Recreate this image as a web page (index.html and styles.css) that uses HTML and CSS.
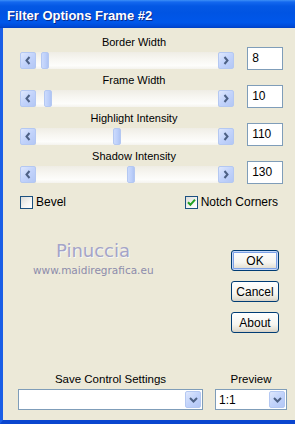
FILE: index.html
```html
<!DOCTYPE html>
<html lang="en">
  <head>
    <meta charset="UTF-8" />
    <meta name="viewport" content="width=device-width, initial-scale=1.0" />
    <title>Filter Options Frame #2</title>
    <link rel="stylesheet" href="styles.css">
  </head>
  <body>
    <div class="window">
      <div class="titlebar">
        <span class="title">Filter Options Frame #2</span>
      </div>

      <div class="client">
        <!-- Sliders -->
        <div class="sliders">
          <div class="slider-group">
            <div class="slider-label">Border Width</div>
            <div class="slider-row">
              <div class="scrollbar">
                <span class="sb-btn"><svg width="8" height="9" viewBox="0 0 8 9"><path d="M5.5 1 L2.5 4.5 L5.5 8" /></svg></span>
                <div class="sb-track"><span class="sb-thumb" style="left: 5px"></span></div>
                <span class="sb-btn"><svg width="8" height="9" viewBox="0 0 8 9"><path d="M2.5 1 L5.5 4.5 L2.5 8" /></svg></span>
              </div>
              <div class="numbox">8</div>
            </div>
          </div>

          <div class="slider-group">
            <div class="slider-label">Frame Width</div>
            <div class="slider-row">
              <div class="scrollbar">
                <span class="sb-btn"><svg width="8" height="9" viewBox="0 0 8 9"><path d="M5.5 1 L2.5 4.5 L5.5 8" /></svg></span>
                <div class="sb-track"><span class="sb-thumb" style="left: 8px"></span></div>
                <span class="sb-btn"><svg width="8" height="9" viewBox="0 0 8 9"><path d="M2.5 1 L5.5 4.5 L2.5 8" /></svg></span>
              </div>
              <div class="numbox">10</div>
            </div>
          </div>

          <div class="slider-group">
            <div class="slider-label">Highlight Intensity</div>
            <div class="slider-row">
              <div class="scrollbar">
                <span class="sb-btn"><svg width="8" height="9" viewBox="0 0 8 9"><path d="M5.5 1 L2.5 4.5 L5.5 8" /></svg></span>
                <div class="sb-track"><span class="sb-thumb" style="left: 77px"></span></div>
                <span class="sb-btn"><svg width="8" height="9" viewBox="0 0 8 9"><path d="M2.5 1 L5.5 4.5 L2.5 8" /></svg></span>
              </div>
              <div class="numbox">110</div>
            </div>
          </div>

          <div class="slider-group">
            <div class="slider-label">Shadow Intensity</div>
            <div class="slider-row">
              <div class="scrollbar">
                <span class="sb-btn"><svg width="8" height="9" viewBox="0 0 8 9"><path d="M5.5 1 L2.5 4.5 L5.5 8" /></svg></span>
                <div class="sb-track"><span class="sb-thumb" style="left: 91px"></span></div>
                <span class="sb-btn"><svg width="8" height="9" viewBox="0 0 8 9"><path d="M2.5 1 L5.5 4.5 L2.5 8" /></svg></span>
              </div>
              <div class="numbox">130</div>
            </div>
          </div>
        </div>

        <!-- Checkboxes -->
        <div class="checks">
          <label class="check">
            <span class="check-box"></span>
            <span>Bevel</span>
          </label>
          <label class="check">
            <span class="check-box"><svg width="9" height="9" viewBox="0 0 9 9"><path d="M1 4.2 L3.4 6.8 L8 1.6" /></svg></span>
            <span>Notch Corners</span>
          </label>
        </div>

        <!-- Watermark + buttons -->
        <div class="middle">
          <div class="watermark">
            <div class="wm-name">Pinuccia</div>
            <div class="wm-url">www.maidiregrafica.eu</div>
          </div>
          <div class="buttons">
            <button class="btn btn-default">OK</button>
            <button class="btn">Cancel</button>
            <button class="btn">About</button>
          </div>
        </div>

        <!-- Bottom combos -->
        <div class="bottom">
          <div class="combo-group">
            <div class="combo-label">Save Control Settings</div>
            <div class="combo">
              <span class="combo-text"></span>
              <span class="combo-btn"><svg width="9" height="6" viewBox="0 0 9 6"><path d="M1 1 L4.5 4.5 L8 1" /></svg></span>
            </div>
          </div>
          <div class="combo-group">
            <div class="combo-label">Preview</div>
            <div class="combo">
              <span class="combo-text">1:1</span>
              <span class="combo-btn"><svg width="9" height="6" viewBox="0 0 9 6"><path d="M1 1 L4.5 4.5 L8 1" /></svg></span>
            </div>
          </div>
        </div>
      </div>
    </div>
  </body>
</html>
```

FILE: styles.css
```css
/* Page */
body {
  margin: 0;
  padding: 0;
  font-family: "Liberation Sans", Arial, sans-serif;
  font-size: 11px;
  color: #000000;
  background: #ece9d8;
}

/* Window frame */
.window {
  width: 295px;
  height: 424px;
  display: flex;
  flex-direction: column;
  overflow: hidden;
}

.titlebar {
  height: 28px;
  flex-shrink: 0;
  display: flex;
  align-items: center;
  padding: 2px 0 0 7px;
  box-sizing: border-box;
  background: linear-gradient(#3d8ff6 0, #1468ef 2px, #0458e4 6px, #0054e3 45%, #0057ea 80%, #004bd9 93%, #0040c4 100%);
}

.title {
  color: #ffffff;
  font-weight: bold;
  font-size: 13px;
  text-shadow: 1px 1px #0a2a8a;
}

.client {
  flex: 1;
  display: flex;
  flex-direction: column;
  background: #ece9d8;
  border-left: 3px solid #1a5ee6;
  border-bottom: 4px solid #0a46cf;
  padding: 8px 12px 10px 17px;
}

/* Sliders */
.sliders {
  display: flex;
  flex-direction: column;
  gap: 4px;
}

.slider-label {
  width: 228px;
  text-align: center;
  line-height: 13px;
}

.slider-row {
  display: flex;
  align-items: flex-end;
  gap: 13px;
  margin-top: -2px;
}

.scrollbar {
  width: 215px;
  height: 17px;
  display: flex;
  margin-bottom: 1px;
}

.sb-btn {
  width: 16px;
  height: 17px;
  box-sizing: border-box;
  border: 1px solid #b4c8f2;
  border-radius: 2px;
  background: linear-gradient(135deg, #dfe8fd, #c2d3fb 50%, #b3c7f5);
  display: flex;
  align-items: center;
  justify-content: center;
  flex-shrink: 0;
}

.sb-btn svg path {
  fill: none;
  stroke: #4d6185;
  stroke-width: 2;
}

.sb-track {
  flex: 1;
  position: relative;
  background: linear-gradient(#efede5, #f7f6f1 40%, #fdfdfb 80%, #f4f3ee);
}

.sb-thumb {
  position: absolute;
  top: 0;
  width: 8px;
  height: 17px;
  box-sizing: border-box;
  border: 1px solid #b4c8f2;
  border-radius: 2px;
  background: linear-gradient(90deg, #cbdafc, #bccffa 60%, #afc4f3);
}

.numbox {
  width: 36px;
  height: 23px;
  box-sizing: border-box;
  border: 1px solid #7f9db9;
  background: #ffffff;
  font-size: 12px;
  line-height: 21px;
  padding-left: 4px;
}

/* Checkboxes */
.checks {
  display: flex;
  justify-content: space-between;
  margin-top: 12px;
  margin-right: 5px;
}

.check {
  display: flex;
  align-items: center;
  gap: 3px;
  font-size: 12px;
  line-height: 13px;
}

.check-box {
  width: 13px;
  height: 13px;
  box-sizing: border-box;
  border: 1px solid #1c5180;
  background: linear-gradient(135deg, #dcdcd7, #f6f6f4 60%, #ffffff);
  display: flex;
  align-items: center;
  justify-content: center;
}

.check-box svg path {
  fill: none;
  stroke: #21a121;
  stroke-width: 2;
}

/* Watermark + buttons */
.middle {
  display: flex;
  justify-content: space-between;
  margin-top: 32px;
}

.watermark {
  width: 120px;
  margin-left: 13px;
  text-align: center;
  font-family: "DejaVu Sans", sans-serif;
}

.wm-name {
  font-size: 18px;
  line-height: 20px;
  color: #a4a4c8;
  text-shadow: 1px 1px #f8f8f4;
}

.wm-url {
  font-size: 10.5px;
  line-height: 14px;
  color: #8c8cab;
  margin-top: 2px;
}

.buttons {
  display: flex;
  flex-direction: column;
  gap: 10px;
  margin-top: 9px;
  margin-right: 4px;
}

.btn {
  width: 48px;
  height: 21px;
  padding: 0;
  font-family: "Liberation Sans", Arial, sans-serif;
  font-size: 12px;
  color: #000000;
  border: 1px solid #003c74;
  border-radius: 3px;
  background: linear-gradient(#ffffff, #f6f5f0 60%, #e6e3d8 85%, #d6d0c5);
}

.btn-default {
  box-shadow: inset 0 0 0 1px #c6d8f8, inset 0 0 0 2px #7ea2e6;
}

/* Bottom combos */
.bottom {
  margin-top: auto;
  margin-left: -2px;
  margin-right: -4px;
  display: grid;
  grid-template-columns: 185px 72px;
  column-gap: 12px;
}

.combo-label {
  text-align: center;
  line-height: 13px;
  margin-bottom: 3px;
  font-size: 11.5px;
}

.combo {
  height: 21px;
  box-sizing: border-box;
  border: 1px solid #7f9db9;
  background: #ffffff;
  display: flex;
  align-items: center;
  padding: 1px;
}

.combo-text {
  flex: 1;
  padding-left: 2px;
  font-size: 12px;
}

.combo-btn {
  width: 16px;
  height: 17px;
  box-sizing: border-box;
  border: 1px solid #b4c8f2;
  border-radius: 2px;
  background: linear-gradient(135deg, #dfe8fd, #c2d3fb 50%, #b3c7f5);
  display: flex;
  align-items: center;
  justify-content: center;
}

.combo-btn svg path {
  fill: none;
  stroke: #4d6185;
  stroke-width: 2;
}
```
